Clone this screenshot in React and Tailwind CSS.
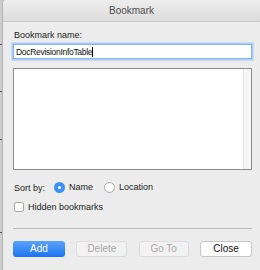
import React from "react";

export default function App() {
  const font = { fontFamily: '"Liberation Sans", Arial, sans-serif' };
  return (
    <div className="w-[260px] h-[270px] flex bg-[#c4c4c4] overflow-hidden" style={font}>
      <div className="w-[2px] h-full bg-[#cdcdcd] relative">
        <div className="absolute left-0 top-[44px] w-[2px] h-[1px] bg-[#555]" />
        <div className="absolute left-0 top-[91px] w-[2px] h-[1px] bg-[#555]" />
        <div className="absolute left-0 top-[139px] w-[2px] h-[1px] bg-[#555]" />
        <div className="absolute left-0 top-[232px] w-[2px] h-[1px] bg-[#555]" />
      </div>
      <div className="flex-1 flex flex-col bg-[#ececec] rounded-tl-[4px] border-l border-[#b5b5b5] overflow-hidden">
        <div className="h-[22px] shrink-0 flex items-center justify-center bg-gradient-to-b from-[#eeeeee] to-[#dcdcdc] border-b border-[#c8c8c8] text-[10px] leading-[12px] text-[#4c4c4c]">
          Bookmark
        </div>
        <div className="flex flex-col pl-[10px] pr-[8px]">
          <div className="mt-[8px] h-[10px] text-[9px] leading-[10px] text-[#222] pl-[1px]">Bookmark name:</div>
          <div className="mt-[4px] h-[15px] bg-white border border-[#88b4f0] shadow-[0_0_0_1.5px_#a9cbf7] flex items-center pl-[2px] text-[8.5px] leading-[10px] tracking-[-0.3px] text-[#111]">
            DocRevisionInfoTable<span className="w-[1px] h-[10px] bg-black" />
          </div>
          <div className="mt-[9px] h-[102px] bg-white border border-[#8c8c8c] flex justify-end">
            <div className="w-[8px] h-full bg-[#f6f6f6] border-l border-[#e6e6e6]" />
          </div>
          <div className="mt-[12px] h-[11px] flex items-center text-[9px] leading-[11px] text-[#222]">
            <span className="ml-[1px] mt-[2px] w-[31px]">Sort by:</span>
            <span className="ml-[9px] w-[11px] h-[11px] rounded-full bg-[#3b91f7] flex items-center justify-center">
              <span className="w-[3px] h-[3px] rounded-full bg-white" />
            </span>
            <span className="ml-[4px] w-[35px]">Name</span>
            <span className="w-[11px] h-[11px] rounded-full bg-white border border-[#a9a9a9]" />
            <span className="ml-[4px]">Location</span>
          </div>
          <div className="mt-[9px] h-[10px] flex items-center text-[9px] leading-[10px] text-[#222]">
            <span className="ml-[1px] w-[10px] h-[10px] rounded-[2px] bg-white border border-[#a9a9a9]" />
            <span className="ml-[4px]">Hidden bookmarks</span>
          </div>
          <div className="mt-[16px] h-[1px] bg-[#b9b9b9]" />
          <div className="mt-[12px] flex justify-between text-[10px] leading-[12px]">
            <div className="w-[52px] h-[16px] rounded-[3px] bg-gradient-to-b from-[#5aa3fb] to-[#1a73f0] text-white flex items-center justify-center">Add</div>
            <div className="w-[51px] h-[16px] rounded-[3px] bg-[#f2f2f2] border border-[#dcdcdc] text-[#a8a8a8] flex items-center justify-center">Delete</div>
            <div className="w-[50px] h-[16px] rounded-[3px] bg-[#f2f2f2] border border-[#dcdcdc] text-[#a8a8a8] flex items-center justify-center">Go To</div>
            <div className="w-[52px] h-[16px] rounded-[3px] bg-white border border-[#c6c6c6] text-[#111] flex items-center justify-center">Close</div>
          </div>
        </div>
      </div>
    </div>
  );
}
